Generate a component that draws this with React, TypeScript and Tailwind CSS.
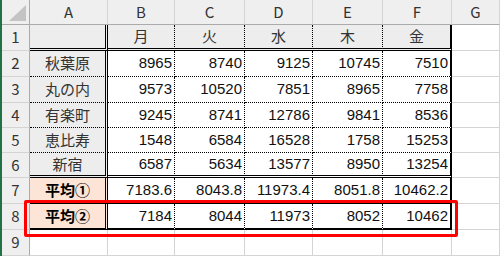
import * as React from "react";

const cols = ["A", "B", "C", "D", "E", "F", "G"];

const rows: { label: string; vals: string[] }[] = [
  { label: "", vals: ["月", "火", "水", "木", "金"] },
  { label: "秋葉原", vals: ["8965", "8740", "9125", "10745", "7510"] },
  { label: "丸の内", vals: ["9573", "10520", "7851", "8965", "7758"] },
  { label: "有楽町", vals: ["9245", "8741", "12786", "9841", "8536"] },
  { label: "恵比寿", vals: ["1548", "6584", "16528", "1758", "15253"] },
  { label: "新宿", vals: ["6587", "5634", "13577", "8950", "13254"] },
  { label: "平均①", vals: ["7183.6", "8043.8", "11973.4", "8051.8", "10462.2"] },
  { label: "平均②", vals: ["7184", "8044", "11973", "8052", "10462"] },
];

const rightClass = (c: number) => {
  if (c === 0) return "border-r-[3px] border-r-black [border-right-style:double]";
  if (c === 5) return "border-r-2 border-r-black [border-right-style:solid]";
  return "border-r border-r-black [border-right-style:dotted]";
};

const bottomClass = (r: number) => {
  if (r === 1 || r === 6) return "border-b-[3px] border-b-black [border-bottom-style:double]";
  if (r === 7) return "border-b border-b-black [border-bottom-style:solid]";
  if (r === 8) return "border-b-2 border-b-black [border-bottom-style:solid]";
  return "border-b border-b-black [border-bottom-style:dotted]";
};

const bgClass = (r: number, c: number) => {
  if (r >= 7 && c === 0) return "bg-[#fce4d6]";
  if (r === 1 || c === 0) return "bg-[#ededed]";
  return "bg-white";
};

export default function App() {
  return (
    <div className="relative flex w-[500px] h-[256px] overflow-hidden bg-white font-['Liberation_Sans','Noto_Sans_CJK_JP',sans-serif] text-[15px] text-[#111]">
      <div className="w-[2px] bg-[#217346]" />
      <div className="grid grid-cols-[28px_78px_67px_70px_68px_70px_69px_48px] grid-rows-[25px_26px_26px_26px_25px_25px_25px_26px_26px_26px]">
        {/* header row */}
        <div className="relative bg-[#efefef] border-r border-b border-[#ababab]">
          <svg className="absolute inset-0" width="28" height="25">
            <polygon points="7,21 24,21 24,5" fill="#c4c4c4" />
          </svg>
        </div>
        {cols.map((c) => (
          <div
            key={c}
            className="flex items-center justify-center bg-[#efefef] border-r border-r-[#d4d4d4] border-b border-b-[#ababab] text-[#333] font-['Noto_Sans_CJK_JP',sans-serif]"
          >
            {c}
          </div>
        ))}

        {rows.map((row, i) => {
          const r = i + 1;
          return (
            <React.Fragment key={r}>
              <div className="flex items-center justify-center bg-[#efefef] border-r border-r-[#ababab] border-b border-b-[#d4d4d4] text-[#333] font-['Noto_Sans_CJK_JP',sans-serif]">
                {r}
              </div>
              <div
                className={`flex items-center justify-center font-['Noto_Sans_CJK_JP',sans-serif] ${r >= 7 ? "font-bold text-black" : "text-[#333]"} ${bgClass(r, 0)} ${rightClass(0)} ${bottomClass(r)}`}
              >
                {row.label}
              </div>
              {row.vals.map((v, j) => (
                <div
                  key={j}
                  className={`flex items-center ${r === 1 ? "justify-center font-['Noto_Sans_CJK_JP',sans-serif] text-[#333]" : "justify-end pr-[2px]"} ${bgClass(r, j + 1)} ${rightClass(j + 1)} ${bottomClass(r)}`}
                >
                  {v}
                </div>
              ))}
              <div className="border-r border-b border-[#d4d4d4]" />
            </React.Fragment>
          );
        })}

        {/* row 9 */}
        <div className="flex items-center justify-center bg-[#efefef] border-r border-r-[#ababab] border-b border-b-[#d4d4d4] text-[#333] font-['Noto_Sans_CJK_JP',sans-serif]">
          9
        </div>
        {cols.map((c) => (
          <div key={c} className="border-r border-b border-[#d4d4d4]" />
        ))}
      </div>

      {/* red highlight box */}
      <div className="absolute left-[24px] top-[200px] w-[434px] h-[37px] border-[3px] border-[#ff0000] rounded-[2px]" />
    </div>
  );
}
